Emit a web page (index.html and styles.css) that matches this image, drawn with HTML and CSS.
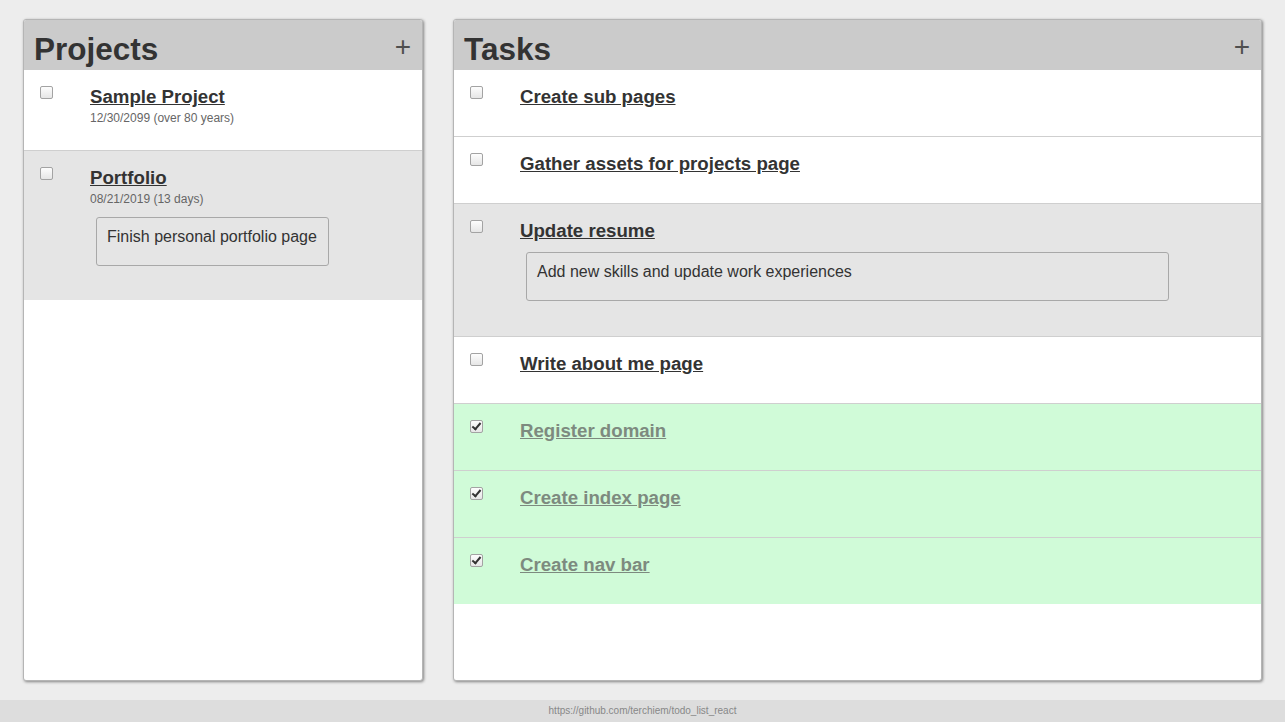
FILE: index.html
```html
<!DOCTYPE html>
<html lang="en">
<head>
<meta charset="utf-8">
<title>Todo List</title>
<link rel="stylesheet" href="styles.css">
</head>
<body>
<main class="board">
  <section class="panel panel-projects">
    <header class="panel-header">
      <h1 class="panel-title">Projects</h1>
      <span class="add-btn">+</span>
    </header>
    <ul class="list">
      <li class="item item-project">
        <input type="checkbox" class="check">
        <div class="item-body">
          <a class="item-title" href="#">Sample Project</a>
          <div class="item-date">12/30/2099 (over 80 years)</div>
        </div>
      </li>
      <li class="item item-project item-open">
        <input type="checkbox" class="check">
        <div class="item-body">
          <a class="item-title" href="#">Portfolio</a>
          <div class="item-date">08/21/2019 (13 days)</div>
          <div class="note note-project">Finish personal portfolio page</div>
        </div>
      </li>
    </ul>
  </section>

  <section class="panel panel-tasks">
    <header class="panel-header">
      <h1 class="panel-title">Tasks</h1>
      <span class="add-btn">+</span>
    </header>
    <ul class="list">
      <li class="item item-task">
        <input type="checkbox" class="check">
        <div class="item-body"><a class="item-title" href="#">Create sub pages</a></div>
      </li>
      <li class="item item-task">
        <input type="checkbox" class="check">
        <div class="item-body"><a class="item-title" href="#">Gather assets for projects page</a></div>
      </li>
      <li class="item item-task item-open">
        <input type="checkbox" class="check">
        <div class="item-body">
          <a class="item-title" href="#">Update resume</a>
          <div class="note note-task">Add new skills and update work experiences</div>
        </div>
      </li>
      <li class="item item-task">
        <input type="checkbox" class="check">
        <div class="item-body"><a class="item-title" href="#">Write about me page</a></div>
      </li>
      <li class="item item-task item-done">
        <input type="checkbox" class="check" checked>
        <div class="item-body"><a class="item-title" href="#">Register domain</a></div>
      </li>
      <li class="item item-task item-done">
        <input type="checkbox" class="check" checked>
        <div class="item-body"><a class="item-title" href="#">Create index page</a></div>
      </li>
      <li class="item item-task item-done">
        <input type="checkbox" class="check" checked>
        <div class="item-body"><a class="item-title" href="#">Create nav bar</a></div>
      </li>
    </ul>
  </section>
</main>
<footer class="footer">https://github.com/terchiem/todo_list_react</footer>
</body>
</html>
```

FILE: styles.css
```css
* { box-sizing: border-box; }

html, body {
  margin: 0;
  height: 100%;
}

body {
  background: #ededed;
  font-family: "Liberation Sans", Arial, sans-serif;
  color: #333;
  display: flex;
  flex-direction: column;
}

.board {
  flex: 1;
  display: flex;
  gap: 30px;
  padding: 19px 23px 19px 23px;
  min-height: 0;
}

.panel {
  background: #fff;
  border: 1px solid #b5b5b5;
  border-radius: 3px;
  box-shadow: 1px 1px 3px rgba(0, 0, 0, 0.45);
  overflow: hidden;
  display: flex;
  flex-direction: column;
}

.panel-projects { width: 400px; flex: none; }
.panel-tasks { flex: 1; }

.panel-header {
  background: #cbcbcb;
  height: 50px;
  padding: 8px 11px 0 10px;
  display: flex;
  justify-content: space-between;
  align-items: center;
}

.panel-title {
  margin: 0;
  font-size: 31.5px;
  line-height: 42px;
  font-weight: bold;
  color: #333;
}

.add-btn {
  font-size: 28px;
  line-height: 1;
  color: #4f4f4f;
  margin-bottom: 5px;
}

.list {
  list-style: none;
  margin: 0;
  padding: 0;
}

.item {
  display: flex;
  align-items: flex-start;
  padding: 16px 20px 25px 16px;
  border-bottom: 1px solid #cfcfcf;
}

.item:last-child { border-bottom: none; }

.item-task { padding-bottom: 29px; }

.item-open { background: #e5e5e5; }
.item-done { background: #d0fbd8; }

.check {
  appearance: none;
  -webkit-appearance: none;
  margin: 0;
  width: 13px;
  height: 13px;
  border: 1px solid #a3a3a3;
  border-radius: 2px;
  background: linear-gradient(#fdfdfd, #e6e6e6);
  flex: none;
  position: relative;
}

.check:checked::after {
  content: "";
  position: absolute;
  left: 3px;
  top: 0px;
  width: 3px;
  height: 7px;
  border: solid #333;
  border-width: 0 2px 2px 0;
  transform: rotate(40deg);
}

.item-body {
  margin-left: 37px;
  flex: 1;
  min-width: 0;
}

.item-title {
  display: block;
  width: max-content;
  font-size: 18.67px;
  line-height: 21px;
  font-weight: bold;
  color: #333;
  text-decoration: underline;
}

.item-done .item-title { color: #7d8a7f; }

.item-date {
  margin-top: 4px;
  font-size: 12px;
  line-height: 14px;
  color: #666;
}

.note {
  margin: 11px 0 9px 6px;
  border: 1px solid #a8a8a8;
  border-radius: 3px;
  font-size: 16px;
  line-height: 18px;
  color: #333;
  padding: 10px 11px 19px 10px;
}

.note-project { display: inline-block; }
.note-task { width: 643px; margin-bottom: 6px; }

.footer {
  height: 22px;
  flex: none;
  background: #dddddd;
  color: #888;
  font-size: 10px;
  line-height: 22px;
  text-align: center;
}
```
